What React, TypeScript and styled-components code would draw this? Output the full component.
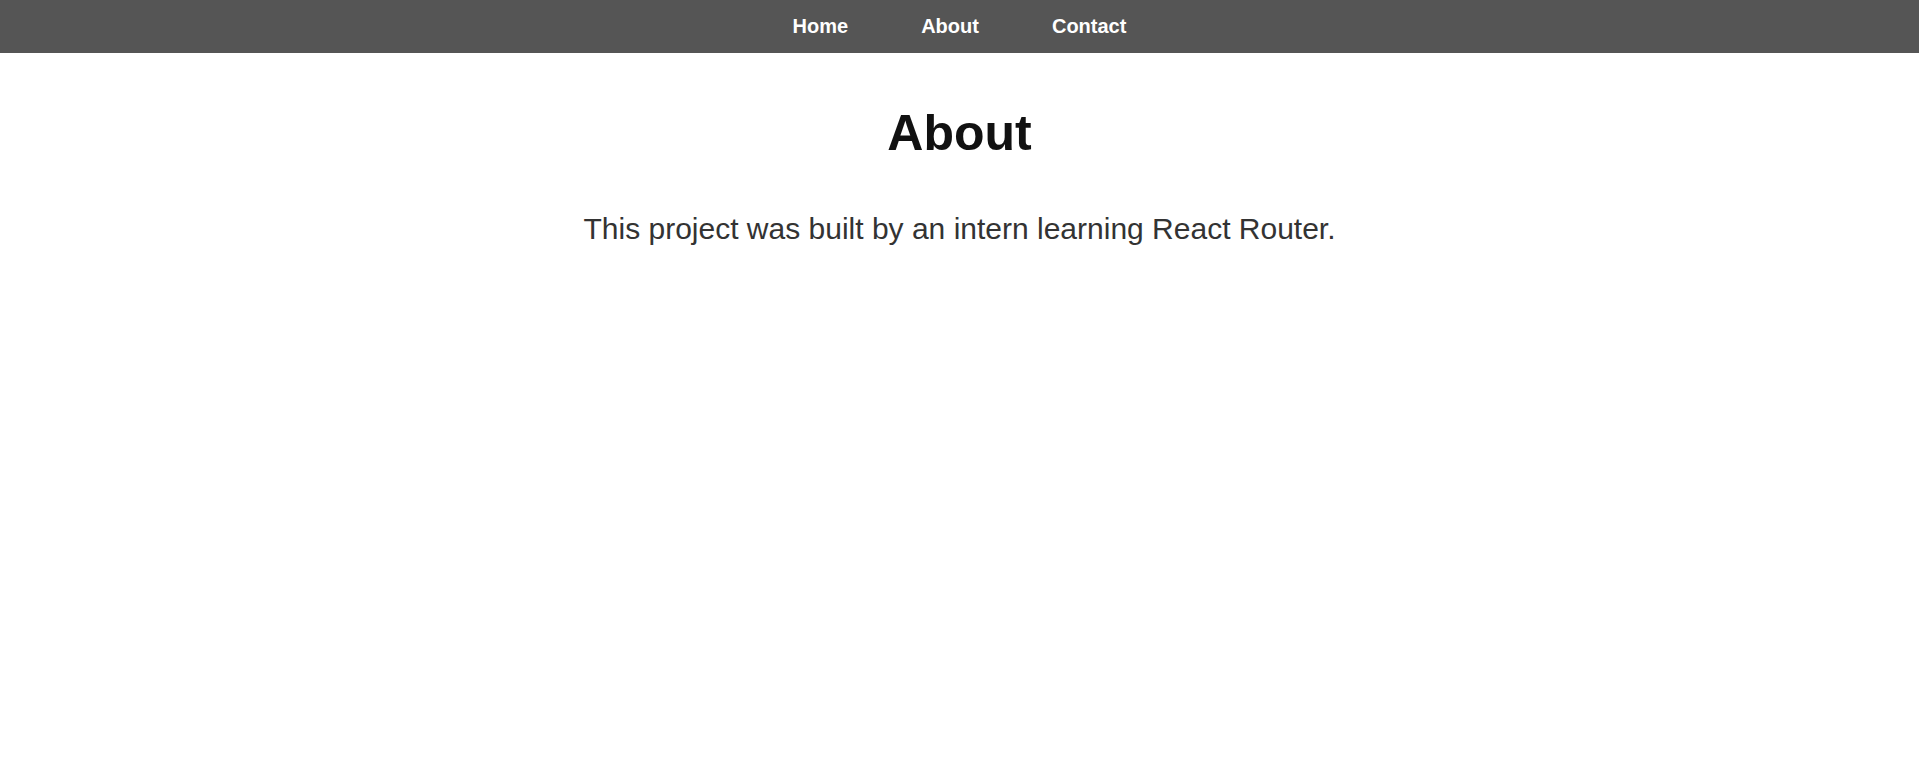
import React from "react";
import styled, { createGlobalStyle } from "styled-components";

const GlobalStyle = createGlobalStyle`
  html, body {
    margin: 0;
    padding: 0;
    background: #ffffff;
    font-family: "Liberation Sans", Arial, sans-serif;
  }
`;

const NavBar = styled.nav`
  background: #555555;
  display: flex;
  justify-content: center;
  align-items: center;
  gap: 73px;
  padding: 15px 0;
  height: 23px;
`;

const NavLink = styled.a`
  color: #ffffff;
  font-weight: 700;
  font-size: 20px;
  line-height: 23px;
  text-decoration: none;
  cursor: pointer;
`;

const Main = styled.main`
  text-align: center;
  padding-top: 51.5px;
`;

const Title = styled.h1`
  margin: 0 0 50px;
  font-size: 50px;
  line-height: 57px;
  font-weight: 700;
  color: #111111;
`;

const Text = styled.p`
  margin: 0;
  font-size: 30px;
  line-height: 34px;
  color: #333333;
`;

export default function App() {
  return (
    <>
      <GlobalStyle />
      <NavBar>
        <NavLink href="#">Home</NavLink>
        <NavLink href="#">About</NavLink>
        <NavLink href="#">Contact</NavLink>
      </NavBar>
      <Main>
        <Title>About</Title>
        <Text>This project was built by an intern learning React Router.</Text>
      </Main>
    </>
  );
}
